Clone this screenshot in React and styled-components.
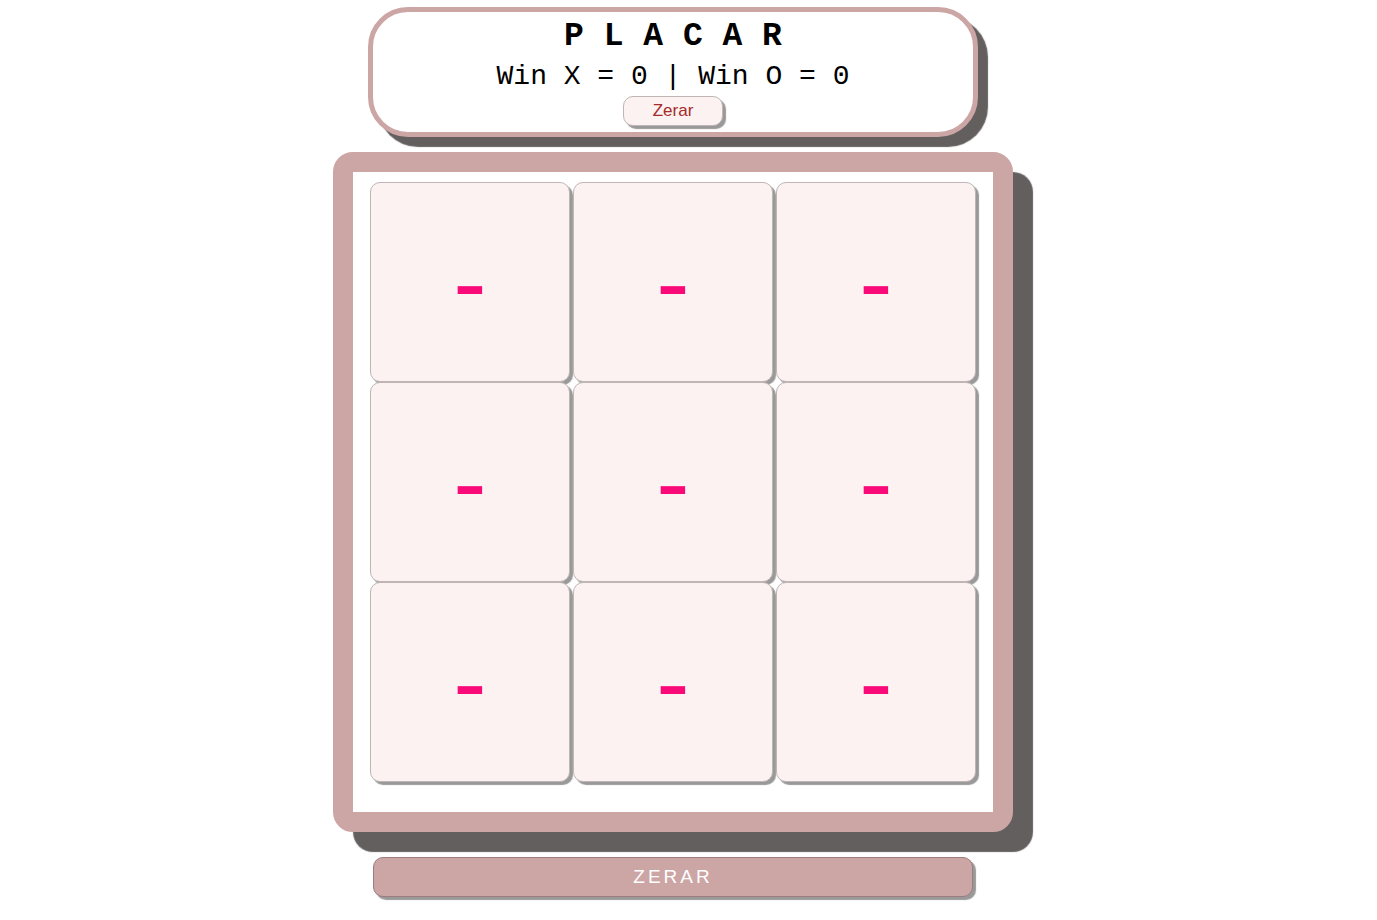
import React, { useState } from "react";
import styled, { createGlobalStyle } from "styled-components";

const GlobalStyle = createGlobalStyle`
  * { box-sizing: border-box; }
  body {
    margin: 0;
    background: #fff;
    font-family: "Liberation Sans", Arial, sans-serif;
  }
`;

const Page = styled.main`
  display: flex;
  flex-direction: column;
  align-items: center;
  padding: 7px 31px 20px 0;
`;

const ScoreBoard = styled.header`
  display: flex;
  flex-direction: column;
  align-items: center;
  width: 100%;
  max-width: 610px;
  margin-bottom: 15px;
  padding: 6px 0;
  border: 5px solid #cca5a5;
  border-radius: 40px;
  background: #fff;
  box-shadow: 10px 10px 1px #645f5f;
  font-family: "Liberation Mono", "Courier New", monospace;
`;

const Title = styled.h1`
  margin: 0 0 2px;
  font-size: 33px;
  line-height: 38px;
`;

const Score = styled.p`
  margin: 0;
  font-size: 28px;
  line-height: 38px;
`;

const BaseButton = styled.button`
  padding: 0;
  border: 1px solid #bfb5b5;
  border-radius: 10px;
  background: #fcf2f2;
  box-shadow: 3px 3px 1px #999;
  font-family: "Liberation Sans", Arial, sans-serif;
  cursor: pointer;
`;

const ResetScore = styled(BaseButton)`
  width: 100px;
  height: 30px;
  color: brown;
  font-size: 17px;
`;

const Board = styled.section`
  display: grid;
  grid-template-columns: repeat(3, 200px);
  grid-auto-rows: 200px;
  column-gap: 3px;
  justify-content: center;
  padding: 10px 0 30px;
  width: 100%;
  max-width: 680px;
  border: 20px solid #cca5a5;
  border-radius: 20px;
  background: #fff;
  box-shadow: 20px 20px 1px #645f5f;
`;

const Cell = styled(BaseButton)`
  color: #fa0a78;
  font-size: 100px;
`;

const ResetGame = styled(BaseButton)`
  width: 100%;
  max-width: 600px;
  height: 40px;
  margin-top: 25px;
  border-color: #9c7c7c;
  background: #cca5a5;
  color: #fff;
  font-size: 19px;
  letter-spacing: 3px;
`;

const EMPTY = Array(9).fill("-");
const LINES = [
  [0, 1, 2], [3, 4, 5], [6, 7, 8],
  [0, 3, 6], [1, 4, 7], [2, 5, 8],
  [0, 4, 8], [2, 4, 6],
];

const hasWon = (cells, player) =>
  LINES.some((line) => line.every((index) => cells[index] === player));

export default function App() {
  const [cells, setCells] = useState(EMPTY);
  const [player, setPlayer] = useState("X");
  const [wins, setWins] = useState({ X: 0, O: 0 });

  const play = (index) => {
    if (cells[index] !== "-" || hasWon(cells, "X") || hasWon(cells, "O")) return;
    const next = cells.map((value, i) => (i === index ? player : value));
    setCells(next);
    if (hasWon(next, player)) setWins({ ...wins, [player]: wins[player] + 1 });
    setPlayer(player === "X" ? "O" : "X");
  };

  return (
    <>
      <GlobalStyle />
      <Page>
        <ScoreBoard>
          <Title>P L A C A R</Title>
          <Score>Win X = {wins.X} | Win O = {wins.O}</Score>
          <ResetScore type="button" onClick={() => setWins({ X: 0, O: 0 })}>
            Zerar
          </ResetScore>
        </ScoreBoard>
        <Board>
          {cells.map((value, index) => (
            <Cell key={index} type="button" onClick={() => play(index)}>
              {value}
            </Cell>
          ))}
        </Board>
        <ResetGame type="button" onClick={() => setCells(EMPTY)}>
          ZERAR
        </ResetGame>
      </Page>
    </>
  );
}
